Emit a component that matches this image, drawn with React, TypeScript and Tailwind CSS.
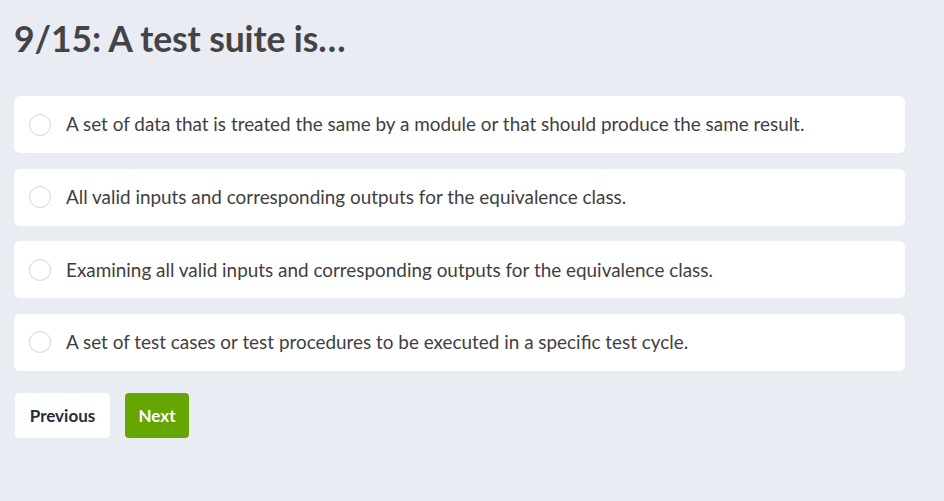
const options = [
  "A set of data that is treated the same by a module or that should produce the same result.",
  "All valid inputs and corresponding outputs for the equivalence class.",
  "Examining all valid inputs and corresponding outputs for the equivalence class.",
  "A set of test cases or test procedures to be executed in a specific test cycle.",
];

export default function App() {
  return (
    <div
      className="min-h-[501px] w-full bg-[#e9ecf3] pl-[14px] pr-[39px] pt-[16px] text-[#414042]"
      style={{ fontFamily: "Lato, 'Noto Sans', sans-serif" }}
    >
      <h1 className="text-[35.5px] font-bold leading-[46px] tracking-[-0.1px] text-[#444346]">
        9/15: A test suite is…
      </h1>

      <div className="mt-[34px] flex flex-col gap-[15.6px]">
        {options.map((opt) => (
          <label
            key={opt}
            className="flex h-[57px] cursor-pointer items-center rounded-[6px] bg-white pl-[15px]"
          >
            <span className="h-[22px] w-[22px] shrink-0 rounded-full border-[1.5px] border-[#d3d4dc] bg-white" />
            <span className="ml-[15px] text-[18.9px] text-[#3f3e42]">{opt}</span>
          </label>
        ))}
      </div>

      <div className="ml-[1px] mt-[22px] flex gap-[15px]">
        <button className="h-[45px] w-[95px] rounded-[4px] bg-white text-[17px] font-bold text-[#2b2b35]">
          Previous
        </button>
        <button className="h-[45px] w-[64px] rounded-[4px] bg-[#66a600] text-[17px] font-bold text-white">
          Next
        </button>
      </div>
    </div>
  );
}
